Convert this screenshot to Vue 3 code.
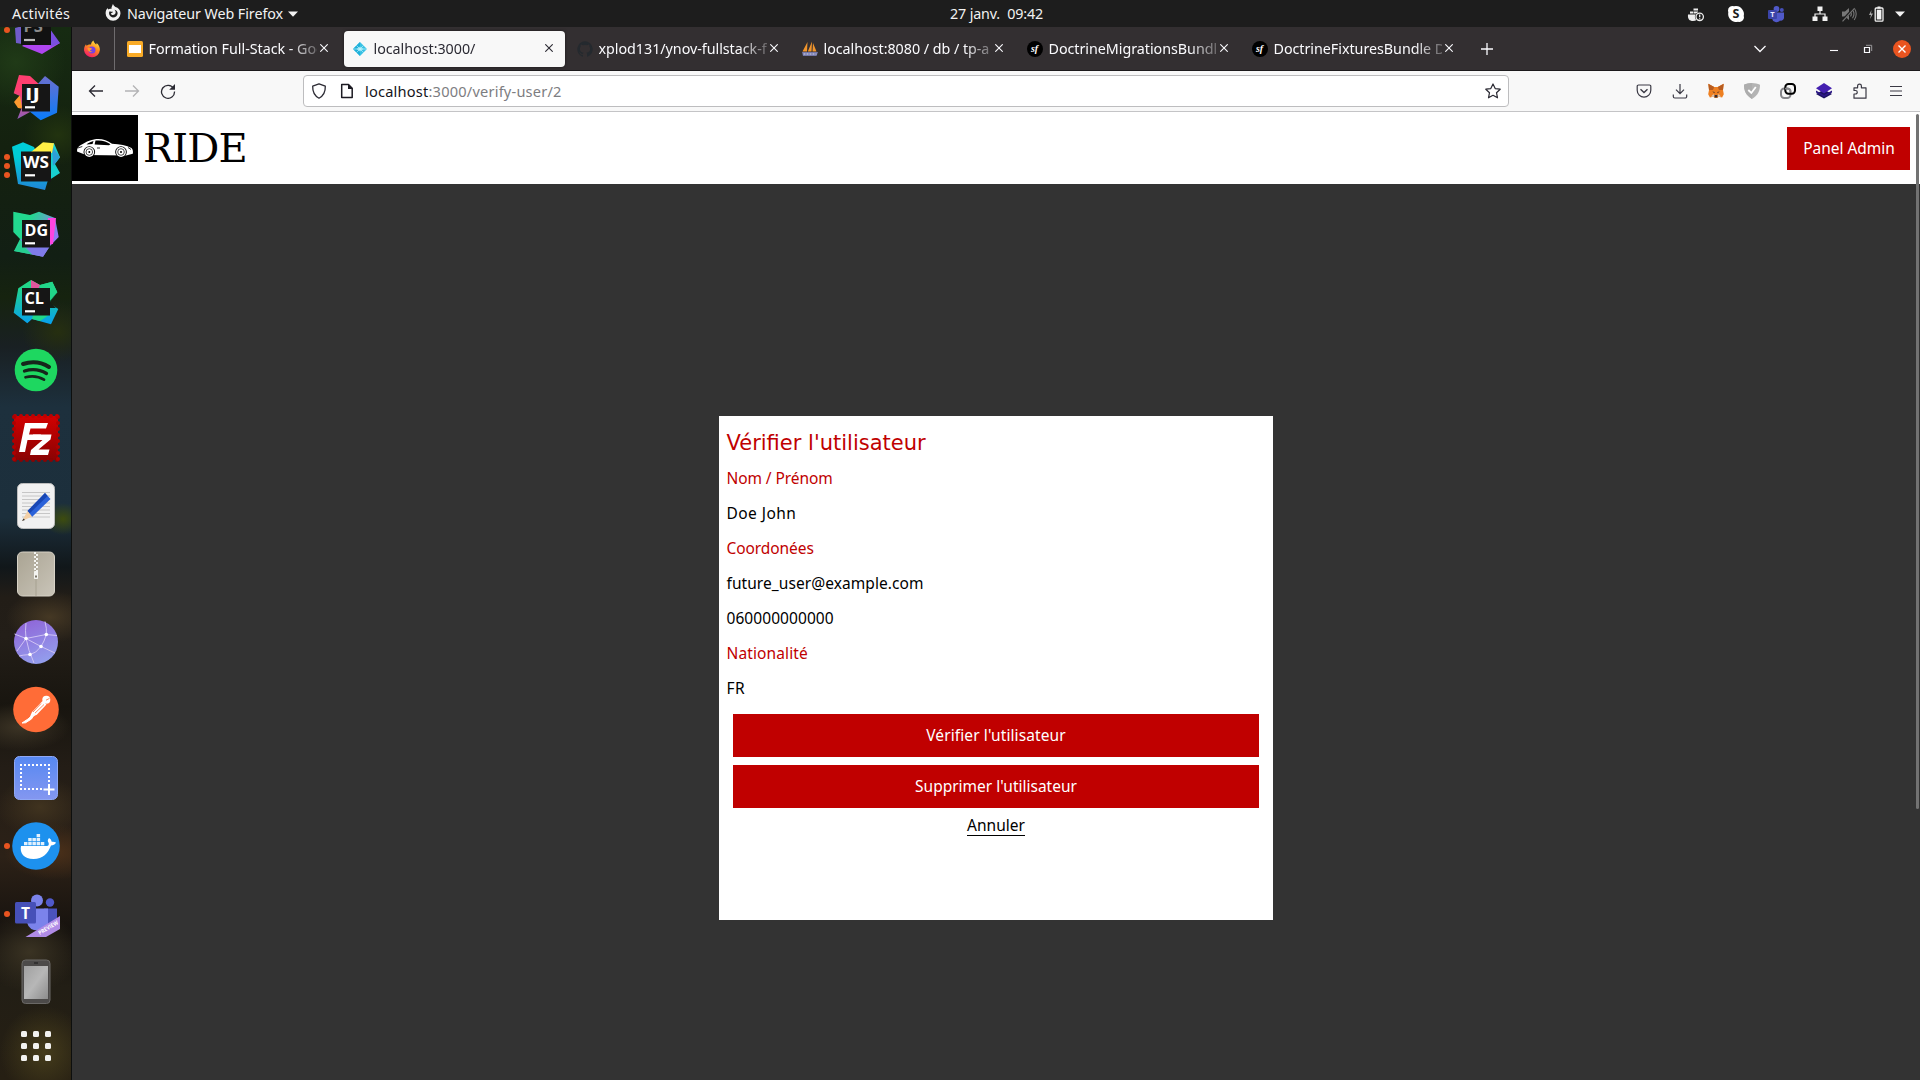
<script setup>
const tabs = [
  { title: 'Formation Full-Stack - Goo', icon: 'slides' },
  { title: 'localhost:3000/', icon: 'strapi', active: true },
  { title: 'xplod131/ynov-fullstack-f', icon: 'github' },
  { title: 'localhost:8080 / db / tp-a|', icon: 'pma' },
  { title: 'DoctrineMigrationsBundl', icon: 'sf' },
  { title: 'DoctrineFixturesBundle D', icon: 'sf' },
]

const details = [
  { text: 'Nom / Prénom', label: true },
  { text: 'Doe John', wide: true },
  { text: 'Coordonées', label: true },
  { text: 'future_user@example.com' },
  { text: '060000000000' },
  { text: 'Nationalité', label: true, loose: true },
  { text: 'FR', wide: true },
]

const jetbrains = [
  { id: 'ij', text: 'IJ', dots: 0, x: 13, width: 15 },
  { id: 'ws', text: 'WS', dots: 3, x: 11, width: 26 },
  { id: 'dg', text: 'DG', dots: 0, x: 12.5, width: 23.5 },
  { id: 'cl', text: 'CL', dots: 0, x: 12.5, width: 19.5 },
]
const gridCells = [0, 1, 2, 3, 4, 5, 6, 7, 8]
const stamp = [0, 1, 2, 3, 4, 5, 6, 7]
</script>

<template>
  <div class="desktop">
    <header class="topbar">
      <span class="activities">Activités</span>
      <svg class="fx-mono" viewBox="0 0 16 18" width="16" height="18">
        <path d="M8 .8c.2 1.5 1.2 2.3 2.4 3.1 3 .8 5.1 3 5.1 6.400a7.400 7.400 0 0 1-14.900 0c0-2.500 1-4.200 2-5.300l.5 1.500c1-.7 2.300-.9 3.400-.4C6 5 7.300 2.700 8 .8z" fill="#f2f2f2" />
        <path d="M4.300 8.600c1.300-.6 2.200.2 3.700.2-.3 1.100-1.800 1.300-2.200 1.700.4 1.600 2.600 2 4 .8 1.300-1.200 1.200-3.300-.4-4.600 2.400.5 3.400 2.300 3.200 4-.3 2.200-2.200 3.700-4.600 3.700-2.600 0-4.600-2.600-3.700-5.800z" fill="#1d1d1d" />
      </svg>
      <span class="appname">Navigateur Web Firefox</span>
      <svg class="caret" viewBox="0 0 10 6" width="10" height="6"><path d="M0 .5h10L5 5.800z" fill="#f2f2f2" /></svg>
      <span class="clock">27 janv.&nbsp; 09:42</span>
      <div class="status">
        <svg viewBox="0 0 20 20" width="20" height="20">
          <path d="M2 10.500h11v2c-1 3-3.200 4.500-6 4.500-3.500 0-5.500-2-5-6.500zM4 7.500h3v2H4zM7.500 4.500H12v2H7.500zM7.500 7.500H12v2H7.500z" fill="#ededed" />
          <circle cx="13.700" cy="12.800" r="4.800" fill="#1d1d1d" /><circle cx="13.700" cy="12.800" r="3.700" fill="none" stroke="#ededed" stroke-width="1.300" />
          <path d="M13.700 10.500v2.700M13.700 14.200v1" stroke="#ededed" stroke-width="1.300" />
        </svg>
        <svg viewBox="0 0 20 20" width="20" height="20">
          <path d="M2 6.500A4.500 4.500 0 0 1 8 2.300 8 8 0 0 1 17.700 12 4.500 4.500 0 0 1 12 17.700 8 8 0 0 1 2.300 8.500z" fill="#fff" />
          <text x="10" y="14.400" text-anchor="middle" class="glyph" font-size="12.500" fill="#1d1d1d">S</text>
        </svg>
        <svg viewBox="0 0 20 20" width="20" height="20">
          <circle cx="10.500" cy="5" r="2.900" fill="#5059c9" /><circle cx="15.800" cy="6" r="2" fill="#4650b8" />
          <path d="M6 8.500h12v5a3 3 0 0 1-4 3 4.500 4.500 0 0 1-8-2z" fill="#5059c9" />
          <rect x="2" y="6" width="9" height="9" rx="1" fill="#3b44a8" />
          <text x="6.500" y="13.200" text-anchor="middle" class="glyph" font-size="7.500" fill="#e8e8ff">T</text>
        </svg>
        <svg class="net" viewBox="0 0 20 20" width="20" height="20">
          <path d="M7.500 2.500h5V7h-5zM2.500 12.500h5V17h-5zM12.500 12.500h5V17h-5z" fill="#f2f2f2" />
          <path d="M10 7v3M5 13v-3h10v3" fill="none" stroke="#f2f2f2" stroke-width="1.200" />
        </svg>
        <svg class="vol" viewBox="0 0 20 20" width="20" height="20">
          <path d="M3 7.500h3L10 4v12l-4-3.500H3z" fill="#777" />
          <path d="M11.500 7.500q1.700 2.500 0 5M13.500 5.800q3 4.200 0 8.400M15.200 4q4 6 0 12" fill="none" stroke="#777" stroke-width="1.100" />
          <path d="M3 17 15 4" stroke="#1d1d1d" stroke-width="2.400" /><path d="M3.500 17.300 15.500 4.300" stroke="#777" stroke-width="1.100" />
        </svg>
        <svg class="bat" viewBox="0 0 20 20" width="20" height="20">
          <path d="M4.500 6 2 11h2l-1 4 3-5.500H4z" fill="#aaa" />
          <path d="M10.500 2.500h3v2h-3z" fill="#f2f2f2" /><rect x="8.200" y="4" width="7.800" height="13.200" rx="1" fill="none" stroke="#f2f2f2" stroke-width="1.300" /><rect x="9.800" y="5.700" width="4.600" height="9.800" fill="#f2f2f2" />
        </svg>
        <svg class="down" viewBox="0 0 10 6" width="10" height="6"><path d="M0 .5h10L5 5.800z" fill="#f2f2f2" /></svg>
      </div>
    </header>

    <div class="body">
      <nav class="dock">
        <div class="apps">
          <div class="app">
            <i class="dots"><b></b></i>
            <svg viewBox="0 0 48 48" width="48" height="48">
              <path d="M3 22 14 19 16 39 4 37z" fill="#6f5bc9" /><path d="M14 37 38 34 48 37 30 48 10 40z" fill="#af45f0" /><path d="M33 10 38 23 48 37 39 41z" fill="#7b4fe0" />
              <rect x="9" y="9" width="30" height="30" fill="#111" />
              <text x="11.500" y="25.500" class="glyph" font-size="16.500" fill="#8a8a8a">PS</text>
              <path d="M12 34h11" stroke="#bbb" stroke-width="2.200" />
            </svg>
          </div>
          <div v-for="j in jetbrains" :key="j.id" class="app">
            <i class="dots"><b v-for="d in j.dots" :key="d"></b></i>
            <svg viewBox="0 0 48 48" width="48" height="48">
              <defs>
                <linearGradient id="ij1" x1="0" y1="0" x2="0" y2="1"><stop offset="0" stop-color="#6b6fd0" /><stop offset="1" stop-color="#087cfa" /></linearGradient>
                <linearGradient id="ij2" x1="0" y1="0" x2="0" y2="1"><stop offset=".35" stop-color="#fe3f70" /><stop offset="1" stop-color="#8d5fb8" /></linearGradient>
                <linearGradient id="ws1" x1="0" y1="0" x2="0" y2="1"><stop offset=".3" stop-color="#00cdd7" /><stop offset="1" stop-color="#2086d7" /></linearGradient>
                <linearGradient id="dg1" x1="0" y1="0" x2="1" y2=".5"><stop offset=".35" stop-color="#22d88f" /><stop offset="1" stop-color="#9775f8" /></linearGradient>
                <linearGradient id="cl1" x1="0" y1="0" x2="0" y2="1"><stop offset=".15" stop-color="#21d789" /><stop offset="1" stop-color="#07a0ee" /></linearGradient>
              </defs>
              <template v-if="j.id === 'ij'">
                <path d="M2 28 8 21 20 24 18 36 6 34z" fill="#fc9a30" />
                <path d="M7 1 18 2 29 12 24 30 18 38 5.300 45 10 33 8 22 1.700 19.300z" fill="url(#ij2)" />
                <path d="M33 2 46.700 12.700 45 38.700 28.700 46.300 17 37 24 12z" fill="url(#ij1)" />
              </template>
              <template v-else-if="j.id === 'ws'">
                <path d="M30 3 42 1.300 48 15.300 43 22 48 31 28 44 16 36z" fill="#18d0d0" />
                <path d="M40 4 48 15.300 41 24z" fill="#2e9fd8" />
                <path d="M0 4.700 11 .3 22 5 36 38 33 48 6 42z" fill="url(#ws1)" />
                <path d="M19 10 31 .3 42 1.300 40 11z" fill="#fff045" />
              </template>
              <template v-else-if="j.id === 'dg'">
                <path d="M1.300 1.700 18 5 27 1.700 43 8 46.700 27 38 36 31 46.700 2 41 8 29 1.300 22z" fill="url(#dg1)" />
                <path d="M8 29 20 44.500 31 46.700 38 36z" fill="#7f7bea" /><path d="M8 34 20 44.500 2 41z" fill="#25cf90" />
                <path d="M36 8 44 8 41 34 34 35z" fill="#fe45e0" />
              </template>
              <template v-else>
                <path d="M6.300 10.300 19 2 28 7 40.300 3.700 45.300 14.300 37 25 46.300 31 39 46.300 20 41 15.300 45.300 1.700 34.700z" fill="url(#cl1)" />
                <path d="M38 14 45.300 14.300 38 24 44 30 38 30z" fill="#142014" /><path d="M28 7 40.300 3.700 45.300 14.300 38 23 30 12z" fill="#21d789" />
                <path d="M19 2 28 7 26 12 19 12z" fill="#e0559d" />
                <path d="M21 37h16l-9 6-8-2z" fill="#21d789" />
              </template>
              <rect v-if="j.id === 'ws'" x="9" y="9.500" width="30" height="30" fill="#161616" />
              <rect v-else x="10" y="10" width="28" height="27.500" fill="#161616" />
              <text :x="j.x" y="25.800" class="glyph" font-size="16" :textLength="j.width" lengthAdjust="spacingAndGlyphs" fill="#fff">{{ j.text }}</text>
              <path d="M13 33.300h10" stroke="#fff" stroke-width="2.200" />
            </svg>
          </div>
          <div class="app">
            <svg viewBox="0 0 48 48" width="48" height="48">
              <circle cx="24" cy="24" r="21.300" fill="#1ed760" />
              <path d="M11 18q14-4.500 26 3" stroke="#16261b" stroke-width="4" fill="none" stroke-linecap="round" />
              <path d="M12.500 25q12-3.600 22 2.500" stroke="#16261b" stroke-width="3.300" fill="none" stroke-linecap="round" />
              <path d="M13.500 31.300q10.500-2.600 18.500 2.400" stroke="#16261b" stroke-width="2.700" fill="none" stroke-linecap="round" />
            </svg>
          </div>
          <div class="app">
            <svg viewBox="0 0 48 48" width="48" height="48">
              <defs><linearGradient id="fz" x1="0" y1="0" x2="0" y2="1"><stop offset="0" stop-color="#d20000" /><stop offset="1" stop-color="#8a0303" /></linearGradient></defs>
              <rect x="2" y="2" width="44" height="44" fill="url(#fz)" />
              <template v-for="n in stamp" :key="n">
                <circle :cx="3 + n * 6" cy="2" r="2" fill="#c00000" /><circle :cx="3 + n * 6" cy="46" r="2" fill="#8a0303" />
                <circle cx="2" :cy="3 + n * 6" r="2" fill="#b00000" /><circle cx="46" :cy="3 + n * 6" r="2" fill="#b00000" />
              </template>
              <path d="M7 38 13 9H36L34 14.500H18.500L17 20.500H29L27.500 26H15.500L13 38z" fill="#fff" />
              <path d="M21 20.500H39.500L38.500 25.500 26.500 35.500H37.500L36 41H18L19 36 30.500 26H20z" fill="#fff" />
            </svg>
          </div>
          <div class="app">
            <svg viewBox="0 0 48 48" width="48" height="48">
              <rect x="5.500" y="1.500" width="37" height="45" rx="5" fill="#f1f1f1" stroke="#bdbdbd" />
              <path d="M10 10.500h28M10 14h28M10 17.500h28M10 21h28M10 24.500h28M10 28h28M10 31.500h28M10 35h28" stroke="#c6c6c6" stroke-width="1" />
              <path d="M33 11 38.500 17 20 35 15.500 29z" fill="#2b62d9" /><path d="M33 11 35.500 14 17.500 31.500 15.500 29z" fill="#1746b4" />
              <path d="M15.500 29 20 34.500 10 39z" fill="#f3cfa5" /><path d="M11.500 36.500 13 38 10 39z" fill="#333" />
            </svg>
          </div>
          <div class="app">
            <svg viewBox="0 0 48 48" width="48" height="48">
              <defs><linearGradient id="ar" x1="0" y1="0" x2="1" y2="1"><stop offset="0" stop-color="#aaa493" /><stop offset="1" stop-color="#c9c4b8" /></linearGradient></defs>
              <rect x="5.500" y="2" width="37" height="44" rx="5" fill="url(#ar)" stroke="#d7d2c6" />
              <path d="M24 3v43" stroke="#9d9888" stroke-width=".7" />
              <path d="M23 2v20" stroke="#f4f4f0" stroke-width="2" stroke-dasharray="2 2" /><path d="M25 4v18" stroke="#f4f4f0" stroke-width="2" stroke-dasharray="2 2" />
              <rect x="22" y="21" width="4" height="8" rx=".8" fill="#f4f4f0" /><rect x="23" y="25.500" width="2" height="2" fill="#7c776a" />
            </svg>
          </div>
          <div class="app">
            <svg viewBox="0 0 48 48" width="48" height="48">
              <defs><linearGradient id="wb" x1=".3" y1="0" x2=".7" y2="1"><stop offset="0" stop-color="#8f66d8" /><stop offset="1" stop-color="#93a0ee" /></linearGradient></defs>
              <circle cx="24" cy="24" r="22" fill="url(#wb)" />
              <path d="M14 5q-1 8 0 15 2 12 8 25M2.500 16 14 20.500 29 28.500 43 35M33 3.500q2 7 1.300 13-2 7-5.300 12-5 7-11 8M14 20.500 34 16.500 45 17.500M14 20.500 5 33M18 36.500Q10 37 7 38" fill="none" stroke="#cfc3f4" stroke-width="1" />
              <circle cx="14" cy="20.500" r="1.800" fill="#fff" /><circle cx="34.300" cy="16.500" r="1.800" fill="#fff" /><circle cx="29" cy="28.500" r="1.800" fill="#fff" /><circle cx="18" cy="36.500" r="1.800" fill="#fff" />
            </svg>
          </div>
          <div class="app">
            <svg viewBox="0 0 48 48" width="48" height="48">
              <circle cx="24" cy="23.500" r="22.800" fill="#ff6c37" />
              <circle cx="34.300" cy="13.700" r="4" fill="#fff" /><path d="M34 14.200l3.500-1.800" stroke="#ff6c37" stroke-width=".8" />
              <path d="M30.500 15 34.500 18.500 25 28.500 17 33 20 26z" fill="#fff" />
              <path d="M32 18.500 20 30M29 17.500 21 26" stroke="#ff6c37" stroke-width=".8" />
              <path d="M23 27 16 33l-6 4 3.500-.2 6-3.800z" stroke="#fff" stroke-width="1" fill="#fff" />
            </svg>
          </div>
          <div class="app">
            <svg viewBox="0 0 48 48" width="48" height="48">
              <defs><linearGradient id="ss" x1="0" y1="0" x2="0" y2="1"><stop offset="0" stop-color="#5688f2" /><stop offset="1" stop-color="#8497f0" /></linearGradient></defs>
              <rect x="2.500" y="2.500" width="43" height="43" rx="5" fill="url(#ss)" stroke="#8fa8f5" />
              <path d="M8 11h30M9 14v20M37 14v14M8 35h23" fill="none" stroke="#fff" stroke-width="2" stroke-dasharray="2 2" />
              <path d="M37 30v11M31.500 35.500h11" stroke="#fff" stroke-width="2" />
            </svg>
          </div>
          <div class="app">
            <i class="dots"><b></b></i>
            <svg viewBox="0 0 48 48" width="48" height="48">
              <circle cx="24" cy="24" r="23.800" fill="#1d91ee" />
              <path d="M9 24h26c1.500 0 2-1 1.700-3-1.500-2-1-3.500.3-5 1.500.8 2.500 2.200 2.700 3.800 1.500-.3 3 0 4.300.8-1 2.200-3 3-5 3C36 31.500 31 37 21.500 37 12 37 7.500 31 9 24z" fill="#fff" />
              <path d="M12 20h3.500v3.200H12zM16.200 20h3.500v3.200h-3.500zM20.400 20h3.500v3.200h-3.500zM24.600 20h3.500v3.200h-3.500zM28.800 20h3.500v3.200h-3.500zM16.200 16h3.500v3.300h-3.500zM20.400 16h3.500v3.300h-3.500zM24.600 16h3.500v3.300h-3.500zM24.600 12h3.500v3.300h-3.500z" fill="#e3f1fd" />
            </svg>
          </div>
          <div class="app">
            <i class="dots"><b></b></i>
            <svg viewBox="0 0 48 48" width="48" height="48">
              <circle cx="38" cy="12.500" r="4.200" fill="#5059c9" /><path d="M32 18.500h13v12l-12 6z" fill="#4b53bc" />
              <circle cx="25" cy="10.500" r="6" fill="#7b83eb" /><path d="M14 18.500h22v16q-4 6-10 6-9 0-11-8z" fill="#7b83eb" />
              <rect x="3" y="12" width="21" height="21.500" rx="1.500" fill="#4650b8" />
              <text x="13.500" y="28.500" text-anchor="middle" class="glyph" font-size="15.500" fill="#fff">T</text>
              <path d="M48 26v13l-14 8H13.500z" fill="#b08be6" />
              <text x="36.300" y="39.800" text-anchor="middle" class="glyph" font-size="5.600" textLength="22" lengthAdjust="spacingAndGlyphs" fill="#fff" transform="rotate(-31 36 38)">PREVIEW</text>
            </svg>
          </div>
          <div class="app">
            <svg viewBox="0 0 48 48" width="48" height="48">
              <defs><linearGradient id="ph" x1="0" y1="0" x2="1" y2="1"><stop offset="0" stop-color="#a0a0a0" /><stop offset=".5" stop-color="#b7b7b7" /><stop offset="1" stop-color="#8c8c8c" /></linearGradient></defs>
              <rect x="10" y="2" width="28" height="43.500" rx="3.500" fill="#4c4a49" stroke="#6a6866" />
              <rect x="12" y="8" width="24" height="33" fill="url(#ph)" /><path d="M22 5h4" stroke="#222" stroke-width="1.200" />
            </svg>
          </div>
        </div>
        <div class="launcher"><span v-for="c in gridCells" :key="c"></span></div>
      </nav>

      <main class="browser">
        <div class="tabbar">
          <div class="pinned">
            <svg viewBox="0 0 18 18" width="18" height="18">
              <defs><linearGradient id="ff" x1=".8" y1="0" x2=".3" y2="1"><stop offset="0" stop-color="#fff04a" /><stop offset=".45" stop-color="#ff8a1e" /><stop offset="1" stop-color="#f5156c" /></linearGradient></defs>
              <path d="M10.500.5c.2 2 1.500 2.800 2.600 4 .5-.3.500-1 .4-1.500 2.200 1.600 3.500 4.200 3.400 7a8 8 0 0 1-15.900.3c0-2.700.8-4.600 2-6l.5 1.500C5 4.500 7 4.300 8 4.600 8 3 9.200 1.300 10.500.5z" fill="url(#ff)" />
              <circle cx="9" cy="10" r="3.500" fill="#7542e5" /><path d="M4.500 8c2-.6 3 .5 4.500.5 0 1-1.500 1.300-2 1.700.6 1.300 1.500 1.500 2.500 1.300-1.500 1.500-5 .3-5-3.500z" fill="#ff9a2a" />
            </svg>
          </div>
          <div v-for="t in tabs" :key="t.title" class="tab" :class="{ active: t.active }">
            <svg class="fav" viewBox="0 0 16 16" width="16" height="16">
              <template v-if="t.icon === 'slides'"><rect width="16" height="16" rx="1.500" fill="#f9ab27" /><rect x="2" y="4" width="12" height="8" fill="#fff" /></template>
              <template v-else-if="t.icon === 'strapi'">
                <path d="M8 1 15 8 8 15 1 8z" fill="#38c1e4" /><path d="M8 1v14L1 8z" fill="#1fb0da" /><path d="M8 5.500 11.500 8 8 10.500 4.500 8z" fill="#8ce4f5" /><path d="M1 8h14M4.500 4.500l7 7M11.500 4.500l-7 7" stroke="#d2f5fc" stroke-width=".6" />
              </template>
              <path v-else-if="t.icon === 'github'" d="M8 .2a8 8 0 0 0-2.500 15.500c.4.100.5-.2.500-.4v-1.500c-2.200.500-2.700-.9-2.700-.9-.4-.9-.9-1.200-.9-1.200-.7-.5.100-.5.100-.5.800.100 1.200.8 1.200.8.700 1.200 1.900.9 2.300.7.100-.5.300-.9.500-1.100-1.800-.2-3.600-.9-3.600-3.900 0-.9.300-1.600.8-2.100-.1-.2-.4-1 .1-2.100 0 0 .7-.2 2.200.8a7.500 7.500 0 0 1 4 0c1.500-1 2.200-.8 2.200-.8.400 1.100.2 1.900.1 2.100.5.500.8 1.300.8 2.100 0 3.100-1.900 3.700-3.700 3.900.3.300.6.800.6 1.500v2.200c0 .2.100.5.500.4A8 8 0 0 0 8 .2z" fill="#24292e" />
              <template v-else-if="t.icon === 'pma'">
                <path d="M5.500 1 5 10.500H.5zM10 .5 9.500 10.500H5.800zM11 2l3.500 8.500H10.500z" fill="#f1952c" /><path d="M0 11h16l-1.500 4H1z" fill="#7276a8" /><path d="M1.500 13h13" stroke="#dcdcf0" stroke-width="1.200" stroke-dasharray="2 1" />
              </template>
              <template v-else><circle cx="8" cy="8" r="8" fill="#000" /><text x="7.600" y="11.300" text-anchor="middle" class="sf" font-size="10" fill="#fff">sf</text></template>
            </svg>
            <span class="title">{{ t.title }}</span>
            <svg class="x" viewBox="0 0 8 8" width="8" height="8"><path d="M.3.300l7.400 7.400M7.700.3.300 7.700" stroke="currentColor" stroke-width="1.100" /></svg>
          </div>
          <svg class="plus" viewBox="0 0 12 12" width="12" height="12"><path d="M6 0v12M0 6h12" stroke="#fbfbfe" stroke-width="1.300" /></svg>
          <svg class="list" viewBox="0 0 12 8" width="12" height="8"><path d="M.5 1 6 6.500 11.500 1" fill="none" stroke="#fbfbfe" stroke-width="1.300" /></svg>
          <svg class="min" viewBox="0 0 8 8" width="8" height="8"><path d="M0 5.500h8" stroke="#fbfbfe" stroke-width="1.100" /></svg>
          <svg class="restore" viewBox="0 0 10 10" width="10" height="10"><path d="M1.500 3.500h5v5h-5z" fill="none" stroke="#fbfbfe" stroke-width="1.200" /><path d="M3 1.300h5.700V7" fill="none" stroke="#9a999c" stroke-width="1" /></svg>
          <svg class="close" viewBox="0 0 18 18" width="18" height="18"><circle cx="9" cy="9" r="9" fill="#e95420" /><path d="M5.500 5.500l7 7M12.500 5.500l-7 7" stroke="#fff" stroke-width="1.400" /></svg>
        </div>

        <div class="toolbar">
          <svg class="back" viewBox="0 0 16 16" width="16" height="16"><path d="M15 8H1.500M7 2.500 1.500 8 7 13.500" fill="none" stroke="#2b2a33" stroke-width="1.300" /></svg>
          <svg class="fwd" viewBox="0 0 16 16" width="16" height="16"><path d="M1 8h13.500M9 2.500 14.500 8 9 13.500" fill="none" stroke="#b3b3b5" stroke-width="1.300" /></svg>
          <svg class="reload" viewBox="0 0 16 16" width="16" height="16"><path d="M13.600 5.500A6.500 6.500 0 1 0 14.500 8.500" fill="none" stroke="#2b2a33" stroke-width="1.300" /><path d="M15 1v5.800H9.200z" fill="#2b2a33" /></svg>
          <div class="urlbar">
            <svg class="shield" viewBox="0 0 16 16" width="16" height="16"><path d="M8 .8 14.300 3.200c.2 5-1.300 9.200-6.300 12C3 12.400 1.500 8.200 1.700 3.200z" fill="none" stroke="#2b2a33" stroke-width="1.300" stroke-linejoin="round" /></svg>
            <svg class="doc" viewBox="0 0 14 16" width="14" height="16"><path d="M1.700 1.500h6.800l3.700 3.700v9.300H1.700z" fill="none" stroke="#1c1b22" stroke-width="1.500" stroke-linejoin="round" /><path d="M8 1v5h5z" fill="#1c1b22" /></svg>
            <span class="url"><b>localhost</b>:3000/verify-user/2</span>
            <svg class="star" viewBox="0 0 16 16" width="16" height="16"><path d="M8 1 10.200 5.600 15.200 6.200 11.500 9.700 12.500 14.800 8 12.300 3.500 14.800 4.500 9.700.8 6.200 5.800 5.600z" fill="none" stroke="#2b2a33" stroke-width="1.200" stroke-linejoin="round" /></svg>
          </div>
          <div class="actions">
            <svg viewBox="0 0 16 16" width="16" height="16"><path d="M2.500 2h11a1.300 1.300 0 0 1 1.300 1.300v4a6.800 6.800 0 0 1-13.600 0v-4A1.300 1.300 0 0 1 2.500 2z" fill="none" stroke="#3a3944" stroke-width="1.200" /><path d="M4.500 6.300 8 9.500l3.500-3.200" fill="none" stroke="#3a3944" stroke-width="1.400" /></svg>
            <svg viewBox="0 0 16 16" width="16" height="16"><path d="M8 1v9.500M4 6.700l4 4 4-4M1.300 11.500v2a1.500 1.500 0 0 0 1.500 1.500h10.400a1.500 1.500 0 0 0 1.500-1.500v-2" fill="none" stroke="#3a3944" stroke-width="1.200" /></svg>
            <svg viewBox="0 0 16 16" width="16" height="16"><path d="M.3.800 6.200 4h3.600L15.700.8 15 7l.8 4.200-1.700 3.300-3.500-.8L9.200 15H6.800l-1.400-1.300-3.500.8L.2 11.200 1 7z" fill="#ee8022" /><path d="M.3.800 6.200 4 5 7 1 7zM15.700.8 9.800 4 11 7l4 0z" fill="#b75c20" /><path d="M4.300 8.500 6.500 9v1.200zM11.700 8.500 9.500 9v1.200z" fill="#2d2a33" /><path d="M6.500 12h3v2.500h-3z" fill="#332d33" /><path d="M3 13.500 5.500 11l1 2-1 1zM13 13.500 10.500 11l-1 2 1 1z" fill="#dbc2ae" /></svg>
            <svg viewBox="0 0 16 16" width="16" height="16"><path d="M8 0c3 .2 5.500.8 8 1.800 0 6-2 10.700-8 14.200C2 12.500 0 7.800 0 1.800 2.500.8 5 .2 8 0z" fill="#b4b4b4" /><path d="M8 0v16C2 12.500 0 7.800 0 1.800 2.500.8 5 .2 8 0z" fill="#adadad" /><path d="M4.300 7 7.300 10l4.500-6" fill="none" stroke="#fff" stroke-width="1.800" /></svg>
            <svg viewBox="0 0 16 16" width="16" height="16"><rect x="1" y="5.500" width="9.500" height="9.500" rx="3.200" fill="none" stroke="#86868a" stroke-width="2" /><rect x="5.300" y="1" width="9.700" height="9.700" rx="3.200" fill="none" stroke="#000" stroke-width="2" /><path d="M5 5.700h2.500a3 3 0 0 1 3 3" fill="none" stroke="#86868a" stroke-width="1.800" /></svg>
            <svg viewBox="0 0 16 16" width="16" height="16"><path d="M8 6.500 16 11 8 15.600 0 11z" fill="#1c1160" /><path d="M0 7.500 8 12l8-4.500v2L8 14 0 9.500z" fill="#2c1785" /><path d="M8 0l8 5.200L8 10.500 0 5.200z" fill="#4420b0" /></svg>
            <svg viewBox="0 0 16 16" width="16" height="16"><path d="M2 15.200V11h1.500a1.700 1.700 0 0 0 0-3.500H2V4.800h3.600V3a1.900 1.900 0 0 1 3.800 0v1.800H14v10.400z" fill="none" stroke="#3a3944" stroke-width="1.200" stroke-linejoin="round" /></svg>
            <svg viewBox="0 0 16 16" width="16" height="16"><path d="M2 3.500h12M2 8h12M2 12.500h12" stroke="#3a3944" stroke-width="1.200" /></svg>
          </div>
        </div>

        <section class="page">
          <div class="site-header">
            <div class="logo">
              <svg viewBox="0 0 66 66" width="66" height="66">
                <rect width="66" height="66" fill="#000" />
                <path d="M5 36.500c0-3 .8-4.500 3-6C13 27.500 17 25 23 24.200c7-.6 12 .8 17 4.600 8 .6 14.500 1.500 19.500 4.200 1.500 1.500 1.700 4 1.300 5.800L54 40.500 14 40z" fill="#fff" />
                <path d="M23.500 25.600c6-.6 11 .5 15 3.700l-1.500 1L22.600 29.500zM14.500 29.500c2-1.500 4-2.600 7-3.400l-1 3z" fill="#000" />
                <path d="M25 33h3M5.800 33l4.500-1.500M56 32.500l3 2" stroke="#000" stroke-width=".8" />
                <circle cx="17.300" cy="37" r="5.800" fill="#000" /><circle cx="17.300" cy="37" r="4.900" fill="#fff" /><circle cx="17.300" cy="37" r="3.300" fill="none" stroke="#000" stroke-width=".7" /><circle cx="17.300" cy="37" r="1" fill="#000" />
                <circle cx="49" cy="37" r="5.800" fill="#000" /><circle cx="49" cy="37" r="4.900" fill="#fff" /><circle cx="49" cy="37" r="3.300" fill="none" stroke="#000" stroke-width=".7" /><circle cx="49" cy="37" r="1" fill="#000" />
              </svg>
              <span class="brand">RIDE</span>
            </div>
            <button class="btn admin">Panel Admin</button>
          </div>
          <div class="content">
            <div class="card">
              <h1>Vérifier l'utilisateur</h1>
              <p v-for="d in details" :key="d.text" :class="{ label: d.label, wide: d.wide, loose: d.loose }">{{ d.text }}</p>
              <div class="buttons">
                <button class="btn verify">Vérifier l'utilisateur</button>
                <button class="btn">Supprimer l'utilisateur</button>
                <a class="cancel">Annuler</a>
              </div>
            </div>
          </div>
          <div class="scrollbar"></div>
        </section>
      </main>
    </div>
  </div>
</template>

<style>
body { margin: 0; overflow: hidden; }
</style>

<style scoped>
.desktop { width: 1920px; height: 1080px; display: flex; flex-direction: column; overflow: hidden; font-family: "Noto Sans", "Open Sans", sans-serif; font-size: 14.3px; background: #333; }
.desktop * { box-sizing: border-box; }
svg { display: block; flex: none; }
.glyph { font-family: "Open Sans", "Noto Sans", sans-serif; font-weight: 700; }
.sf { font-family: "Liberation Serif", serif; font-style: italic; font-weight: 700; }

.topbar { height: 27px; flex: none; display: flex; align-items: center; background: #1d1d1d; color: #f2f2f2; white-space: nowrap; }
.activities { width: 93px; padding-left: 12px; letter-spacing: .25px; }
.fx-mono { margin: 0 6px 3px 12px; }
.appname { width: 161px; letter-spacing: -.07px; }
.clock { margin-left: 652px; letter-spacing: -.14px; }
.activities, .appname, .clock { padding-bottom: 1px; }
.status { margin-left: auto; display: flex; align-items: center; gap: 20px; padding-right: 15px; }
.net { margin-left: 4px; }
.vol { margin-left: -11px; }
.bat { margin-left: -12px; }
.down { margin-left: -12px; margin-top: 1px; }

.body { flex: 1; display: flex; min-height: 0; }
.dock {
  width: 72px; flex: none; overflow: hidden; display: flex; flex-direction: column; align-items: stretch;
  border-right: 1px solid #0d0f0e;
  background:
    radial-gradient(34px 30px at 58px 108px, #22330f 0, transparent 100%),
    radial-gradient(50px 46px at 16px 35px, #203a17 0, transparent 100%),
    radial-gradient(36px 30px at 58px 305px, #262f10 0, transparent 100%),
    radial-gradient(20px 16px at 63px 492px, #3d4c0e 0, transparent 100%),
    radial-gradient(44px 26px at 50px 590px, #453824 0, transparent 100%),
    radial-gradient(50px 24px at 20px 700px, #3c3425 0, transparent 100%),
    radial-gradient(44px 30px at 40px 780px, #40331f 0, transparent 100%),
    radial-gradient(50px 28px at 54px 825px, #4b3019 0, transparent 100%),
    radial-gradient(50px 40px at 30px 925px, #3a3323 0, transparent 100%),
    radial-gradient(44px 46px at 44px 1025px, #453c1b 0, transparent 100%),
    linear-gradient(#162b12 0, #14210f 120px, #121f14 230px, #16230f 270px, #192023 320px, #1d303d 380px, #1c2f3c 490px, #11171a 540px, #221d17 570px, #231e18 610px, #18150f 680px, #231d16 740px, #2c2117 830px, #16120e 905px, #221e15 960px, #261f13 1053px);
}
.apps { display: flex; flex-direction: column; margin-top: -31px; }
.app { height: 68px; flex: none; display: flex; align-items: center; padding-left: 12px; position: relative; }
.dots { position: absolute; left: 4px; top: 0; height: 68px; display: flex; flex-direction: column; justify-content: center; gap: 3px; }
.dots b { width: 6px; height: 6px; border-radius: 50%; background: #e95420; }
.launcher { margin: 15px 0 0 21px; display: grid; grid-template-columns: repeat(3, 6px); gap: 6px; }
.launcher span { width: 6px; height: 6px; border-radius: 1.5px; background: #f2f2f0; }

.browser { flex: 1; min-width: 0; display: flex; flex-direction: column; }
.tabbar { height: 44px; flex: none; display: flex; align-items: center; background: #332f31; border-bottom: 1px solid #1c1a1c; color: #fbfbfe; }
.pinned { width: 43px; height: 43px; flex: none; margin-right: 2px; display: flex; align-items: center; padding-left: 11px; border-right: 1px solid #6f6c6e; }
.tab { width: 221px; height: 36px; flex: none; margin: 0 2px; padding-left: 8px; display: flex; align-items: center; border-radius: 4px; }
.tab.active { background: #f8f8f8; color: #2b2a33; box-shadow: 0 0 3px rgba(0, 0, 0, .5); }
.fav { margin-right: 5.500px; }
.title { width: 168.500px; overflow: hidden; white-space: nowrap; letter-spacing: -.03px; mask-image: linear-gradient(to right, #000 140px, transparent 178px); }
.x { margin-left: 3px; margin-bottom: 1px; }
.plus { margin-left: 14px; }
.list { margin-left: 261px; }
.min { margin-left: 64px; }
.restore { margin-left: 25px; }
.close { margin-left: 20px; }

.toolbar { height: 41px; flex: none; display: flex; align-items: center; background: #f8f8f8; border-bottom: 1px solid #c4c4c6; }
.back { margin-left: 16px; }
.fwd { margin-left: 20px; }
.reload { margin-left: 20px; }
.urlbar { width: 1206px; height: 32px; margin-left: 127px; display: flex; align-items: center; background: #fff; border: 1px solid #bdbdbf; border-radius: 4px; }
.shield { margin-left: 7px; }
.doc { margin-left: 13px; }
.url { margin-left: 11px; font-size: 14.6px; letter-spacing: .2px; color: #7d7d81; white-space: nowrap; }
.url b { font-weight: 400; color: #15141a; }
.star { margin-left: auto; margin-right: 7px; }
.actions { margin-left: auto; display: flex; gap: 20px; padding-right: 16px; }

.page { flex: 1; min-height: 0; display: flex; flex-direction: column; position: relative; background: #333; }
.site-header { height: 72px; flex: none; display: flex; align-items: center; justify-content: space-between; padding-right: 10px; background: #fff; }
.logo { display: flex; align-items: center; }
.brand { margin-left: 5px; font: 40px/66px "DejaVu Serif", serif; letter-spacing: -.8px; color: #000; }
.btn { height: 43px; padding: 0 0 1px; border: 0; border-radius: 0; background: #c00000; color: #fff; font: 15.5px "Noto Sans", sans-serif; }
.verify { letter-spacing: .1px; }
.admin { width: 123px; padding: 0 0 0 1px; letter-spacing: -.04px; }
.content { flex: 1; display: flex; justify-content: center; align-items: flex-start; padding-top: 232px; }
.card { width: 554px; height: 504px; padding: 9px 8px 0 7.500px; background: #fff; color: #000; font-size: 15.5px; }
.card h1 { margin: 0; font: 400 21px/36px "DejaVu Sans", sans-serif; color: #c00000; }
.card p { margin: 0; height: 35px; line-height: 35px; letter-spacing: .07px; }
.card .label { color: #c00000; letter-spacing: -.08px; }
.card .wide { letter-spacing: .45px; }
.card .loose { letter-spacing: .12px; }
.buttons { display: flex; flex-direction: column; align-items: stretch; gap: 8px; padding: 8px 6px 0 6.500px; }
.cancel { align-self: center; height: 20px; line-height: 19px; border-bottom: 1px solid #000; }
.scrollbar { position: absolute; right: 1px; top: 2px; width: 3px; height: 695px; border-radius: 2px; background: #727272; }
</style>
